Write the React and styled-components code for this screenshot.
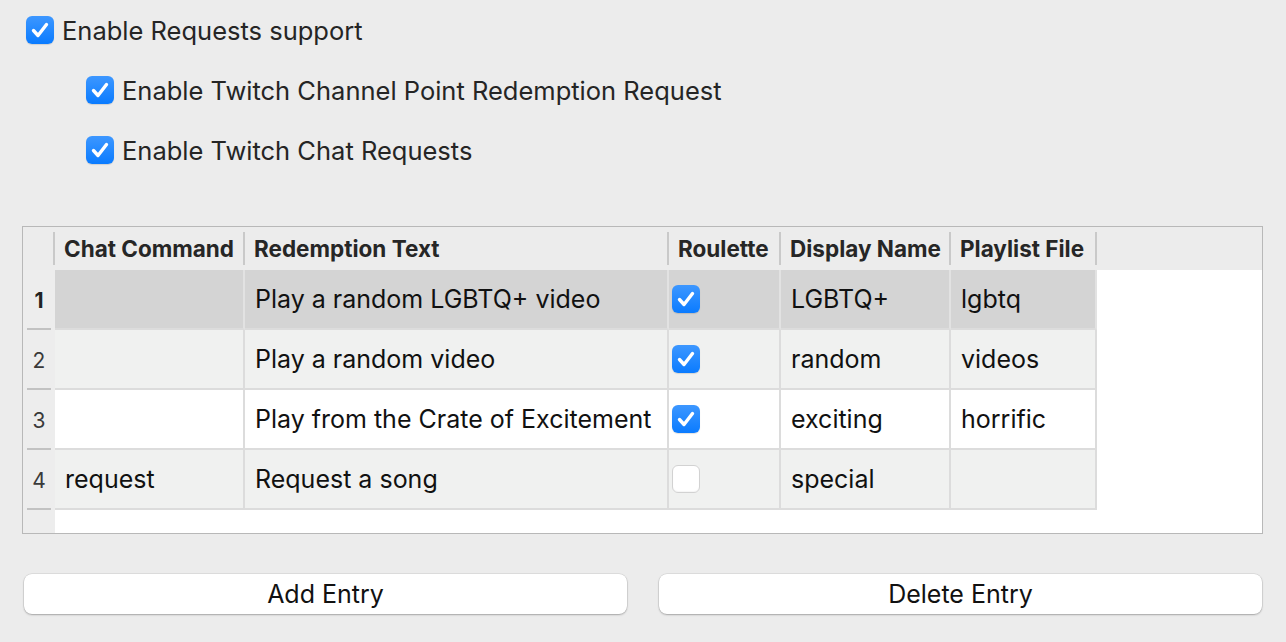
import styled, { createGlobalStyle } from "styled-components";

const GlobalStyle = createGlobalStyle`
  html, body {
    margin: 0;
    padding: 0;
    background: #ececec;
    font-family: Inter, "Liberation Sans", Arial, sans-serif;
    color: #222;
  }
`;

const Page = styled.div`
  width: 1286px;
  height: 642px;
  overflow: hidden;
  background: #ececec;
`;

const Options = styled.div`
  display: flex;
  flex-direction: column;
`;

const OptionRow = styled.label`
  display: flex;
  align-items: center;
  gap: 8px;
  height: 60px;
  padding-left: ${(p) => (p.$nested ? 86 : 26)}px;
  font-size: 25.5px;
  color: #252525;
`;

const OptionText = styled.span`
  white-space: nowrap;
  overflow: hidden;
  max-width: ${(p) => p.$max || "none"};
`;

const Box = styled.span`
  flex: none;
  width: 28px;
  height: 28px;
  box-sizing: border-box;
  border-radius: 6px;
  display: inline-flex;
  align-items: center;
  justify-content: center;
  background: ${(p) =>
    p.$checked ? "linear-gradient(#3d97ff, #0a7bff)" : "#ffffff"};
  border: ${(p) => (p.$checked ? "none" : "1px solid #d2d2d2")};
  box-shadow: ${(p) =>
    p.$checked ? "0 1px 1px rgba(0,0,0,0.12)" : "inset 0 -1px 1px rgba(0,0,0,0.04)"};
`;

function Check({ checked = true }) {
  return (
    <Box $checked={checked}>
      {checked && (
        <svg width="28" height="28" viewBox="0 0 28 28">
          <path
            d="M7.5 14.5 L12 19.5 L20.5 8.5"
            fill="none"
            stroke="#fff"
            strokeWidth="3.4"
            strokeLinecap="round"
            strokeLinejoin="round"
          />
        </svg>
      )}
    </Box>
  );
}

const TableFrame = styled.div`
  margin: 46px 23px 0 22px;
  height: 308px;
  box-sizing: border-box;
  border: 1px solid #b8b8b8;
  background: #fff;
  display: flex;
  flex-direction: column;
  position: relative;
  overflow: hidden;
`;

const RowHeaderStrip = styled.div`
  position: absolute;
  left: 0;
  top: 0;
  bottom: 0;
  width: 32px;
  background: #ededed;
`;

const cols = "32px 190px 424px 112px 170px 146px 1fr";

const HeadRow = styled.div`
  display: grid;
  grid-template-columns: ${cols};
  height: 43px;
  background: #ececec;
  position: relative;
`;

const HeadCell = styled.div`
  display: flex;
  align-items: center;
  padding-left: ${(p) => (p.$blank ? 0 : 9)}px;
  font-size: 22.5px;
  font-weight: bold;
  color: #262626;
  position: relative;
  white-space: nowrap;
  &::after {
    content: "";
    display: ${(p) => (p.$last ? "none" : "block")};
    position: absolute;
    right: 0;
    top: 5px;
    bottom: 5px;
    width: 2px;
    background: #c9c9c9;
  }
`;

const BodyRow = styled.div`
  display: grid;
  grid-template-columns: ${cols};
  height: 60px;
  position: relative;
`;

const RowNum = styled.div`
  display: flex;
  align-items: center;
  justify-content: center;
  font-size: 21px;
  font-weight: ${(p) => (p.$active ? "bold" : "normal")};
  color: ${(p) => (p.$active ? "#222" : "#3a3a3a")};
  position: relative;
  &::after {
    content: "";
    position: absolute;
    left: 4px;
    right: 4px;
    bottom: 0;
    height: 2px;
    background: #c2c2c2;
  }
`;

const rowBg = { selected: "#d4d4d4", alt: "#f0f1f0", plain: "#ffffff" };

const Cell = styled.div`
  display: flex;
  align-items: center;
  padding-left: ${(p) => (p.$box ? 3 : 10)}px;
  font-size: 25px;
  color: #111;
  background: ${(p) => rowBg[p.$bg]};
  border-right: 2px solid ${(p) => (p.$bg === "selected" ? "#e2e2e2" : "#dcdcdc")};
  border-bottom: 2px solid #dcdcdc;
  white-space: nowrap;
  overflow: hidden;
`;

const Buttons = styled.div`
  display: grid;
  grid-template-columns: 1fr 1fr;
  gap: 32px;
  padding: 40px 24px 0 24px;
`;

const Button = styled.button`
  height: 40px;
  border: none;
  border-radius: 8px;
  background: #fff;
  font-family: Inter, "Liberation Sans", Arial, sans-serif;
  font-size: 25px;
  color: #111;
  box-shadow: 0 0 0 0.5px rgba(0, 0, 0, 0.12), 0 1px 2px rgba(0, 0, 0, 0.25);
  cursor: pointer;
`;

const rows = [
  { cmd: "", text: "Play a random LGBTQ+ video", roulette: true, name: "LGBTQ+", file: "lgbtq" },
  { cmd: "", text: "Play a random video", roulette: true, name: "random", file: "videos" },
  { cmd: "", text: "Play from the Crate of Excitement", roulette: true, name: "exciting", file: "horrific" },
  { cmd: "request", text: "Request a song", roulette: false, name: "special", file: "" },
];

const headers = ["Chat Command", "Redemption Text", "Roulette", "Display Name", "Playlist File"];

export default function App() {
  return (
    <Page>
      <GlobalStyle />
      <Options>
        <OptionRow>
          <Check />
          <OptionText>Enable Requests support</OptionText>
        </OptionRow>
        <OptionRow $nested>
          <Check />
          <OptionText $max="600px">Enable Twitch Channel Point Redemption Requests</OptionText>
        </OptionRow>
        <OptionRow $nested>
          <Check />
          <OptionText>Enable Twitch Chat Requests</OptionText>
        </OptionRow>
      </Options>

      <TableFrame>
        <RowHeaderStrip />
        <HeadRow>
          <HeadCell $blank />
          {headers.map((h) => (
            <HeadCell key={h}>{h}</HeadCell>
          ))}
          <HeadCell $last />
        </HeadRow>
        {rows.map((r, i) => {
          const bg = i === 0 ? "selected" : i % 2 === 1 ? "alt" : "plain";
          return (
            <BodyRow key={i}>
              <RowNum $active={i === 0}>{i + 1}</RowNum>
              <Cell $bg={bg}>{r.cmd}</Cell>
              <Cell $bg={bg}>{r.text}</Cell>
              <Cell $bg={bg} $box>
                <Check checked={r.roulette} />
              </Cell>
              <Cell $bg={bg}>{r.name}</Cell>
              <Cell $bg={bg}>{r.file}</Cell>
            </BodyRow>
          );
        })}
      </TableFrame>

      <Buttons>
        <Button>Add Entry</Button>
        <Button>Delete Entry</Button>
      </Buttons>
    </Page>
  );
}
